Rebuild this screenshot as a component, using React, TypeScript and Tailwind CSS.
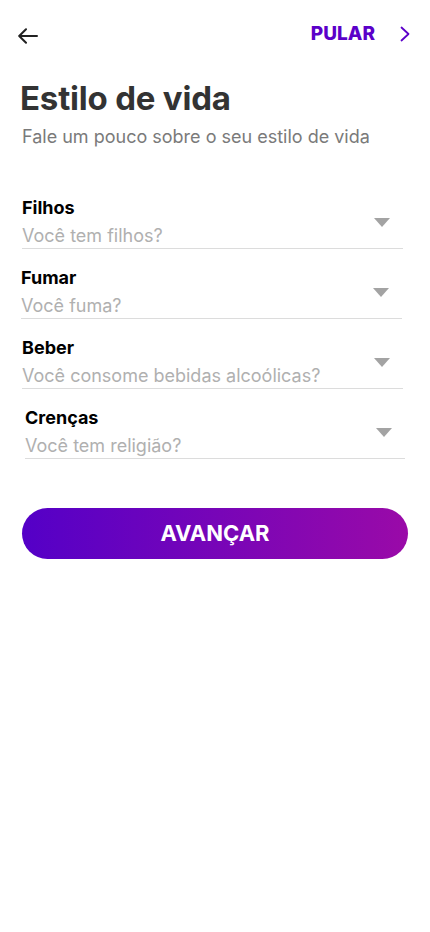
import React from "react";

type Field = {
  label: string;
  placeholder: string;
  offset: string;
};

const fields: Field[] = [
  { label: "Filhos", placeholder: "Você tem filhos?", offset: "ml-[22px] mr-[27px]" },
  { label: "Fumar", placeholder: "Você fuma?", offset: "ml-[21px] mr-[28px]" },
  { label: "Beber", placeholder: "Você consome bebidas alcoólicas?", offset: "ml-[22px] mr-[27px]" },
  { label: "Crenças", placeholder: "Você tem religião?", offset: "ml-[25px] mr-[25px]" },
];

function SelectField({ label, placeholder, offset }: Field) {
  return (
    <div className={`flex items-center border-b border-[#dcdcdc] ${offset}`}>
      <div className="flex flex-1 flex-col gap-1">
        <span className="text-[18px] leading-6 font-bold text-black">{label}</span>
        <span className="text-[18px] leading-6 text-[#b0b0b0]">{placeholder}</span>
      </div>
      <svg width="16" height="9" viewBox="0 0 16 9" className="mr-[13px]">
        <path d="M0 0h16L8 9z" fill="#a3a3a3" />
      </svg>
    </div>
  );
}

export default function App() {
  return (
    <div className="min-h-[932px] w-[430px] bg-white font-['Inter',sans-serif]">
      <div className="flex h-[66px] items-center pl-[18px] pr-[20px] pt-[2px]">
        <svg width="20" height="16" viewBox="0 0 20 16" fill="none" stroke="#222" strokeWidth="2" strokeLinecap="round" strokeLinejoin="round" className="mt-[3px]">
          <path d="M19 8H1.5M8 1.2L1.2 8l6.8 6.8" />
        </svg>
        <div className="flex-1" />
        <span className="text-[19px] font-extrabold text-[#5b00c9]">PULAR</span>
        <svg width="10" height="16" viewBox="0 0 10 16" fill="none" stroke="#5b00c9" strokeWidth="1.8" strokeLinecap="round" strokeLinejoin="round" className="ml-[25px]">
          <path d="M1.5 1.5L8.5 8l-7 6.5" />
        </svg>
      </div>

      <h1 className="mt-[12px] pl-[20px] text-[33px] leading-10 font-bold tracking-[-0.2px] text-[#333]">Estilo de vida</h1>
      <p className="mt-[7px] pl-[22px] text-[18px] leading-6 text-[#7a7a7a]">Fale um pouco sobre o seu estilo de vida</p>

      <div className="mt-[47px] flex flex-col gap-[17px]">
        {fields.map((f) => (
          <SelectField key={f.label} {...f} />
        ))}
      </div>

      <div className="mt-[49px] px-[22px]">
        <button className="flex h-[51px] w-[386px] items-center justify-center rounded-full bg-[linear-gradient(90deg,#5400c7,#9a0aa8)] text-[22px] font-bold text-white">
          AVANÇAR
        </button>
      </div>
    </div>
  );
}
